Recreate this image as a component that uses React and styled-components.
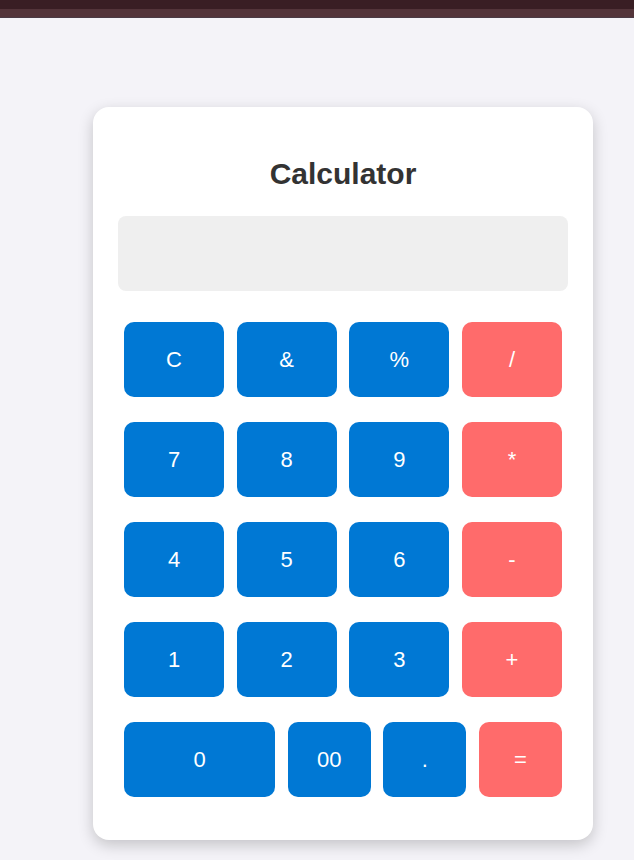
import React from "react";
import styled, { createGlobalStyle } from "styled-components";

const GlobalStyle = createGlobalStyle`
  * { box-sizing: border-box; }
  body {
    margin: 0;
    background: #f4f3f8;
    font-family: "Liberation Sans", Arial, sans-serif;
  }
`;

const TopBar = styled.div`
  height: 18px;
  background: linear-gradient(to bottom, #391e24 0, #391e24 9px, #53343a 9px, #53343a 17px, #4a3a44 17px);
`;

const Page = styled.div`
  padding: 89px 0 20px 93px;
`;

const Card = styled.div`
  width: 500px;
  padding: 25px 25px 43px;
  background: #ffffff;
  border-radius: 16px;
  box-shadow: 0 5px 15px rgba(0, 0, 0, 0.2);
`;

const Title = styled.h2`
  margin: 25px 0 25px;
  font-size: 30px;
  line-height: 34px;
  font-weight: bold;
  color: #333333;
  text-align: center;
`;

const Display = styled.div`
  height: 75px;
  background: #efefef;
  border-radius: 8px;
`;

const Keypad = styled.div`
  display: flex;
  flex-direction: column;
  gap: 25px;
  padding: 0 6px;
  margin-top: 31px;
`;

const Row = styled.div`
  display: grid;
  grid-template-columns: ${(props) => (props.$wide ? "1.82fr 1fr 1fr 1fr" : "repeat(4, 1fr)")};
  column-gap: 12.67px;
`;

const Key = styled.button`
  height: 75px;
  border: none;
  border-radius: 10px;
  background: ${(props) => (props.$op ? "#ff6b6b" : "#0078d4")};
  color: #ffffff;
  font-family: "Liberation Sans", Arial, sans-serif;
  font-size: 22px;
  cursor: pointer;
`;

const rows = [
  [["C"], ["&"], ["%"], ["/", true]],
  [["7"], ["8"], ["9"], ["*", true]],
  [["4"], ["5"], ["6"], ["-", true]],
  [["1"], ["2"], ["3"], ["+", true]],
];

const App = () => {
  return (
    <>
      <GlobalStyle />
      <TopBar />
      <Page>
        <Card>
          <Title>Calculator</Title>
          <Display />
          <Keypad>
            {rows.map((row, i) => (
              <Row key={i}>
                {row.map(([label, op]) => (
                  <Key key={label} $op={op}>
                    {label}
                  </Key>
                ))}
              </Row>
            ))}
            <Row $wide>
              <Key>0</Key>
              <Key>00</Key>
              <Key>.</Key>
              <Key $op>=</Key>
            </Row>
          </Keypad>
        </Card>
      </Page>
    </>
  );
};

export default App;
